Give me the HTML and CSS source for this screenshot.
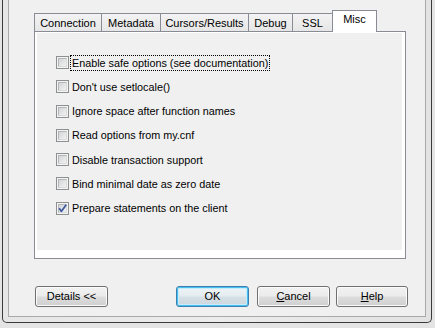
FILE: index.html
```html
<!DOCTYPE html>
<html>
<head>
<meta charset="utf-8">
<link rel="stylesheet" href="styles.css">
</head>
<body>
<div class="window">
  <div class="client">
    <div class="tabs">
      <div class="tab w-conn">Connection</div>
      <div class="tab w-meta">Metadata</div>
      <div class="tab w-curs">Cursors/Results</div>
      <div class="tab w-debug">Debug</div>
      <div class="tab w-ssl">SSL</div>
      <div class="tab sel w-misc">Misc</div>
    </div>
    <div class="panel">
      <div class="page">
        <div class="row"><span class="cb"><span class="cb-in"></span></span><span class="lbl focus">Enable safe options (see documentation)</span></div>
        <div class="row"><span class="cb"><span class="cb-in"></span></span><span class="lbl">Don't use setlocale()</span></div>
        <div class="row"><span class="cb"><span class="cb-in"></span></span><span class="lbl">Ignore space after function names</span></div>
        <div class="row"><span class="cb"><span class="cb-in"></span></span><span class="lbl">Read options from my.cnf</span></div>
        <div class="row"><span class="cb"><span class="cb-in"></span></span><span class="lbl">Disable transaction support</span></div>
        <div class="row"><span class="cb"><span class="cb-in"></span></span><span class="lbl">Bind minimal date as zero date</span></div>
        <div class="row"><span class="cb checked"><span class="cb-in"></span><svg class="tick" width="13" height="13" viewBox="0 0 13 13"><path d="M3.2 6.2 L5.3 9.4 L10.2 2.8" fill="none" stroke="#3a57a0" stroke-width="1.7" stroke-linejoin="round"/></svg></span><span class="lbl">Prepare statements on the client</span></div>
      </div>
    </div>
    <div class="buttons">
      <button class="btn details">Details &lt;&lt;</button>
      <button class="btn default">OK</button>
      <button class="btn cancel"><u>C</u>ancel</button>
      <button class="btn help"><u>H</u>elp</button>
    </div>
  </div>
</div>
</body>
</html>
```
FILE: styles.css
```css
html, body {
  margin: 0;
  padding: 0;
}
body {
  width: 435px;
  height: 328px;
  overflow: hidden;
  background: #e4e4e4;
  font-family: "Liberation Sans", Arial, sans-serif;
  font-size: 11px;
  color: #000;
}
.window {
  box-sizing: border-box;
  margin-left: 2px;
  width: 430px;
  height: 323px;
  border: 1px solid #3a3a3a;
  border-top: 0;
  border-radius: 0 0 5px 5px;
  background: linear-gradient(90deg, #e6e6e6, #ececec 50%, #e2e2e2);
  padding: 0 5px 5px 5px;
}
.client {
  box-sizing: border-box;
  height: 100%;
  background: #f0f0f0;
  border: 1px solid #a9a9a9;
  border-top: 0;
  padding: 10px 0 0 25px;
}
.tabs {
  display: flex;
  align-items: flex-end;
  height: 21px;
}
.tab {
  box-sizing: border-box;
  height: 18px;
  margin-right: -1px;
  border: 1px solid #898c95;
  border-bottom: 0;
  background: linear-gradient(#f3f3f3, #e6e6e6);
  text-align: center;
  line-height: 16px;
  padding-top: 1px;
  white-space: nowrap;
}
.tab.sel {
  position: relative;
  z-index: 1;
  height: 22px;
  margin-bottom: -1px;
  background: #fff;
  padding-top: 0;
}
.w-conn { width: 68px; }
.w-meta { width: 60px; }
.w-curs { width: 89px; }
.w-debug { width: 45px; }
.w-ssl { width: 41px; }
.w-misc { width: 45px; }
.panel {
  box-sizing: border-box;
  width: 372px;
  height: 228px;
  border: 1px solid #898c95;
  background: #fff;
  padding: 1px 3px 8px 2px;
}
.page {
  box-sizing: border-box;
  height: 100%;
  background: #f0f0f0;
  padding: 17.5px 0 0 19px;
}
.row {
  display: flex;
  align-items: center;
  height: 24.25px;
}
.cb {
  position: relative;
  box-sizing: border-box;
  width: 13px;
  height: 13px;
  border: 1px solid #8e8f8f;
  background: #f4f4f4;
  padding: 1px;
  flex: none;
}
.cb-in {
  display: block;
  box-sizing: border-box;
  width: 9px;
  height: 9px;
  border: 1px solid #b4b6ba;
  border-right-color: #d8dadc;
  border-bottom-color: #d8dadc;
  background: linear-gradient(135deg, #d2d4d6, #f2f2f2);
}
.tick {
  position: absolute;
  left: -1px;
  top: -1px;
}
.lbl {
  margin-left: 1px;
  border: 1px dotted transparent;
  padding: 0 1px;
  font-size: 10.8px;
  line-height: 14px;
  white-space: nowrap;
}
.lbl.focus {
  border-color: #000;
}
.buttons {
  display: flex;
  margin-top: 27px;
  padding-left: 1px;
}
.btn {
  box-sizing: border-box;
  width: 73px;
  height: 21px;
  margin: 0;
  padding: 0;
  border: 1px solid #707070;
  border-radius: 3px;
  background: linear-gradient(#f2f2f2 0%, #ebebeb 48%, #dddddd 52%, #cfcfcf 100%);
  box-shadow: inset 0 0 0 1px #fbfbfb;
  font-family: "Liberation Sans", Arial, sans-serif;
  font-size: 11px;
  color: #000;
  line-height: 17px;
}
.btn u {
  text-decoration: underline;
}
.details {
  margin-right: 68px;
}
.default {
  border-color: #3c7fb1;
  box-shadow: inset 0 0 0 1px #48bfee, inset 0 0 0 2px #c6ebfa;
  background: linear-gradient(#eef4f7 0%, #e4ecf0 48%, #d6e0e6 52%, #cbd6dc 100%);
}
.cancel {
  margin-left: 8px;
}
.help {
  margin-left: 6px;
  width: 72px;
}
```
